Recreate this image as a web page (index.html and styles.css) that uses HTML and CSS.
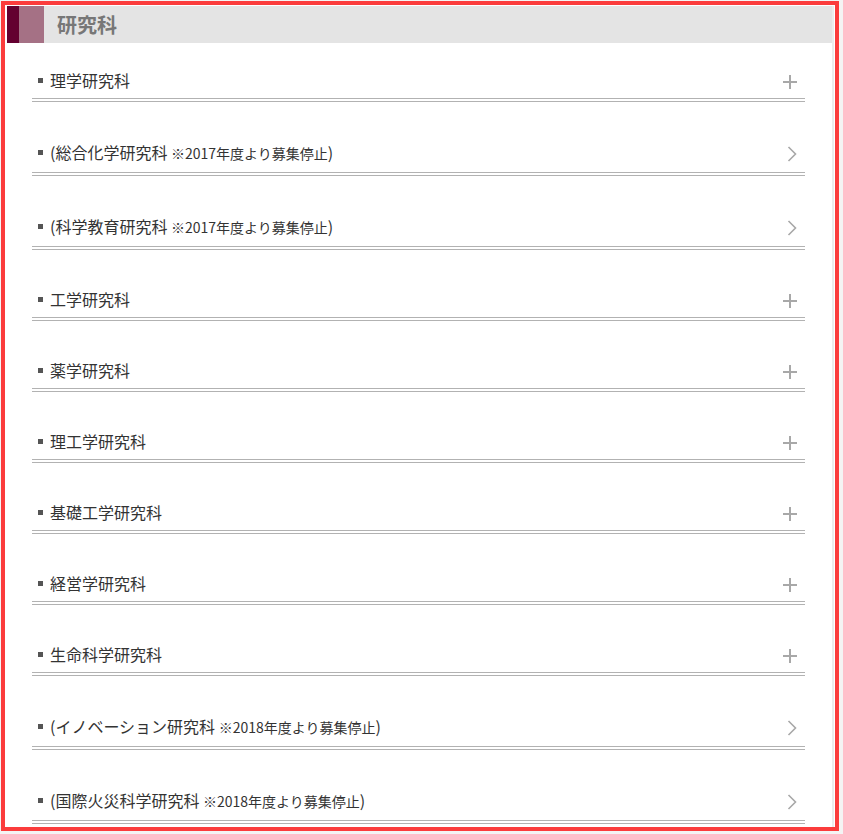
FILE: index.html
```html
<!DOCTYPE html>
<html lang="ja">
<head>
<meta charset="utf-8">
<title>研究科</title>
<link rel="stylesheet" href="styles.css">
</head>
<body>
<div class="frame">
  <div class="panel">
    <div class="heading">
      <span class="mark-dark"></span><span class="mark-light"></span>
      <h2 class="heading-text">研究科</h2>
    </div>
    <ul class="list">
      <li class="row first"><div class="head"><span class="bullet"></span><span class="label">理学研究科</span><span class="plus"></span></div><div class="rule"></div></li>
      <li class="row link"><div class="head"><span class="bullet"></span><span class="label">(総合化学研究科 <small class="note">※2017年度より募集停止</small>)</span><svg class="chev" width="10" height="16" viewBox="0 0 10 16"><polyline points="1.5,1 8.5,8 1.5,15" fill="none" stroke="#a8a8a8" stroke-width="1.6"/></svg></div><div class="rule"></div></li>
      <li class="row link"><div class="head"><span class="bullet"></span><span class="label">(科学教育研究科 <small class="note">※2017年度より募集停止</small>)</span><svg class="chev" width="10" height="16" viewBox="0 0 10 16"><polyline points="1.5,1 8.5,8 1.5,15" fill="none" stroke="#a8a8a8" stroke-width="1.6"/></svg></div><div class="rule"></div></li>
      <li class="row"><div class="head"><span class="bullet"></span><span class="label">工学研究科</span><span class="plus"></span></div><div class="rule"></div></li>
      <li class="row"><div class="head"><span class="bullet"></span><span class="label">薬学研究科</span><span class="plus"></span></div><div class="rule"></div></li>
      <li class="row"><div class="head"><span class="bullet"></span><span class="label">理工学研究科</span><span class="plus"></span></div><div class="rule"></div></li>
      <li class="row"><div class="head"><span class="bullet"></span><span class="label">基礎工学研究科</span><span class="plus"></span></div><div class="rule"></div></li>
      <li class="row"><div class="head"><span class="bullet"></span><span class="label">経営学研究科</span><span class="plus"></span></div><div class="rule"></div></li>
      <li class="row"><div class="head"><span class="bullet"></span><span class="label">生命科学研究科</span><span class="plus"></span></div><div class="rule"></div></li>
      <li class="row link"><div class="head"><span class="bullet"></span><span class="label">(イノベーション研究科 <small class="note">※2018年度より募集停止</small>)</span><svg class="chev" width="10" height="16" viewBox="0 0 10 16"><polyline points="1.5,1 8.5,8 1.5,15" fill="none" stroke="#a8a8a8" stroke-width="1.6"/></svg></div><div class="rule"></div></li>
      <li class="row link"><div class="head"><span class="bullet"></span><span class="label">(国際火災科学研究科 <small class="note">※2018年度より募集停止</small>)</span><svg class="chev" width="10" height="16" viewBox="0 0 10 16"><polyline points="1.5,1 8.5,8 1.5,15" fill="none" stroke="#a8a8a8" stroke-width="1.6"/></svg></div><div class="rule"></div></li>
    </ul>
  </div>
</div>
</body>
</html>
```
FILE: styles.css
```css
html, body {
  margin: 0;
  padding: 0;
  background: #f4f4f4;
}
body {
  font-family: "Noto Sans CJK JP", "Noto Sans", sans-serif;
  color: #333;
}
.frame {
  box-sizing: border-box;
  margin: 1px 0 0 1px;
  width: 838px;
  height: 830px;
  border: 4px solid #fb3c3c;
  background: #fff;
  overflow: hidden;
  padding: 1px 1px 0 2px;
}
.panel {
  width: 825px;
  border-right: 2px solid #ececec;
  background: #fff;
  height: 100%;
}
.heading {
  display: flex;
  align-items: center;
  height: 37px;
  background: #e4e4e4;
}
.mark-dark {
  width: 12px;
  height: 100%;
  background: #640030;
}
.mark-light {
  width: 25px;
  height: 100%;
  background: #a57185;
}
.heading-text {
  margin: 0 0 0 13px;
  font-size: 20px;
  font-weight: bold;
  color: #777;
  line-height: 1;
}
.list {
  list-style: none;
  margin: 0;
  padding: 0 27px 0 25px;
}
.row {
  margin-top: 27px;
}
.row.first {
  margin-top: 15px;
}
.head {
  box-sizing: border-box;
  display: flex;
  align-items: center;
  height: 40px;
  padding: 4px 8px 0 6px;
}
.row.link .head {
  height: 43px;
  padding-top: 3px;
}
.bullet {
  width: 5px;
  height: 5px;
  background: #555;
  margin-right: 7px;
  flex: none;
}
.label {
  flex: 1;
  font-size: 16px;
  line-height: 20px;
  color: #333;
}
.note {
  font-size: 14px;
}
.plus {
  position: relative;
  width: 14px;
  height: 14px;
  margin-top: 4px;
  flex: none;
}
.plus::before,
.plus::after {
  content: "";
  position: absolute;
  background: #a8a8a8;
}
.plus::before {
  left: 0;
  right: 0;
  top: 6px;
  height: 2px;
}
.plus::after {
  top: 0;
  bottom: 0;
  left: 6px;
  width: 2px;
}
.chev {
  flex: none;
  margin-top: 3px;
  display: block;
}
.rule {
  height: 2px;
  border-top: 1px solid #b2b2b2;
  border-bottom: 1px solid #b2b2b2;
}
```
